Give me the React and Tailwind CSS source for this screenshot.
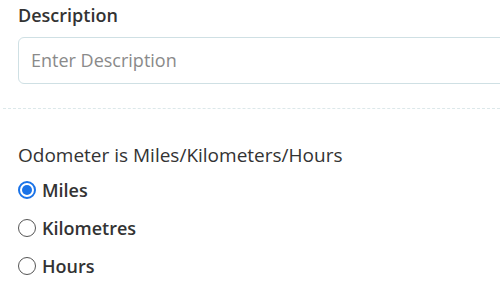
import React from "react";

export default function App() {
  return (
    <div className="w-[500px] h-[300px] overflow-hidden bg-white text-[#333] font-['Open_Sans',sans-serif]">
      <div className="pl-[18px] pt-[3px]">
        <div className="text-[18px] font-semibold leading-[24px] text-[#333]">Description</div>
        <div className="mt-[10px] h-[47px] w-[500px] rounded-[6px] border border-[#cfe0e4] flex items-center pl-[12px] text-[18px] text-[#8a8a8a]">
          Enter Description
        </div>
      </div>
      <div className="mt-[24px] ml-[3px] border-t border-dashed border-[#dce8ea]"></div>
      <div className="pl-[18px] pt-[34px]">
        <div className="text-[19px] font-medium leading-[24px] text-[#333]">Odometer is Miles/Kilometers/Hours</div>
        <div className="mt-[11px] flex flex-col gap-[14px]">
          <label className="flex items-center gap-[6px] h-[24px]">
            <span className="w-[18px] h-[18px] rounded-full border-[2px] border-[#1a73e8] flex items-center justify-center">
              <span className="w-[10px] h-[10px] rounded-full bg-[#1a73e8]"></span>
            </span>
            <span className="text-[18px] font-semibold text-[#333]">Miles</span>
          </label>
          <label className="flex items-center gap-[6px] h-[24px]">
            <span className="w-[18px] h-[18px] rounded-full border-[1.5px] border-[#555]"></span>
            <span className="text-[18px] font-semibold text-[#333]">Kilometres</span>
          </label>
          <label className="flex items-center gap-[6px] h-[24px]">
            <span className="w-[18px] h-[18px] rounded-full border-[1.5px] border-[#555]"></span>
            <span className="text-[18px] font-semibold text-[#333]">Hours</span>
          </label>
        </div>
      </div>
    </div>
  );
}
